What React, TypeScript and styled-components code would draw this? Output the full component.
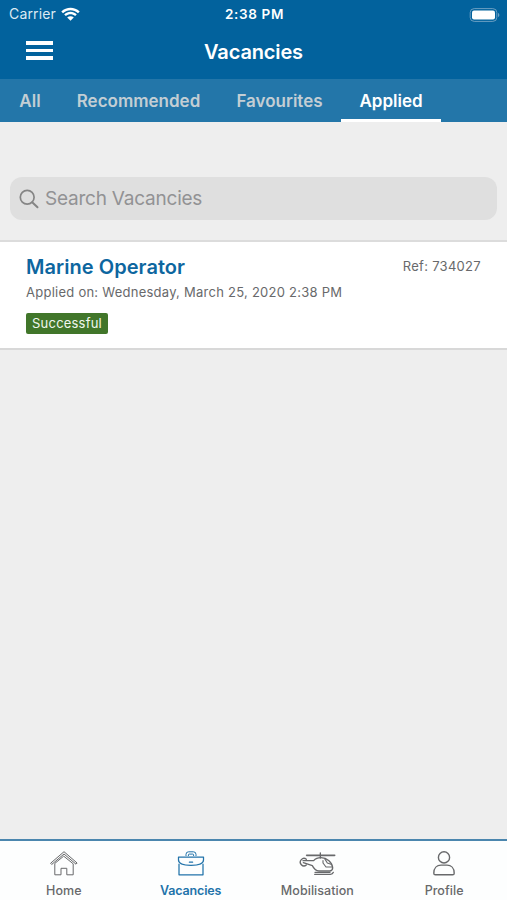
import React from "react";
import styled, { createGlobalStyle } from "styled-components";

const GlobalStyle = createGlobalStyle`
  * { box-sizing: border-box; }
  body { margin: 0; background: #eeeeee; }
`;

const Screen = styled.div`
  display: flex;
  flex-direction: column;
  width: 507px;
  height: 900px;
  overflow: hidden;
  background: #eeeeee;
  font-family: Inter, "Liberation Sans", sans-serif;
`;

const Header = styled.header`
  flex: none;
  height: 79px;
  background: #02629d;
  color: #fff;
`;

const StatusBar = styled.div`
  display: grid;
  grid-template-columns: 1fr auto 1fr;
  align-items: center;
  height: 28px;
  padding: 0 7px 0 9px;
`;

const Carrier = styled.div`
  display: flex;
  align-items: center;
  gap: 5px;
`;

const Label = styled.span<{ $size: number; $weight?: number; $spacing?: number; $color?: string }>`
  font-size: ${(p) => p.$size}px;
  font-weight: ${(p) => p.$weight ?? 400};
  letter-spacing: ${(p) => p.$spacing ?? 0}px;
  color: ${(p) => p.$color ?? "inherit"};
  line-height: 1.2;
  white-space: nowrap;
`;

const BatterySlot = styled.div`
  display: flex;
  justify-content: flex-end;
  padding-top: 1px;
`;

const TitleBar = styled.div`
  display: grid;
  grid-template-columns: 1fr auto 1fr;
  align-items: center;
  height: 48px;
  padding: 0 26px;
`;

const MenuButton = styled.button`
  display: flex;
  flex-direction: column;
  gap: 4px;
  width: 27px;
  padding: 0;
  margin-top: -3px;
  border: 0;
  background: none;
`;

const MenuLine = styled.span`
  height: 3.7px;
  background: #fff;
`;

const Tabs = styled.nav`
  display: grid;
  grid-template-columns: 58px 159px 123px 100px;
  flex: none;
  height: 43px;
  padding-left: 1px;
  background: #2376a9;
`;

const Tab = styled.a<{ $active?: boolean }>`
  display: flex;
  align-items: center;
  justify-content: center;
  padding-top: 4px;
  color: ${(p) => (p.$active ? "#ffffff" : "#c3ced4")};
  border-bottom: 3px solid ${(p) => (p.$active ? "#ffffff" : "transparent")};
`;

const Main = styled.main`
  flex: 1;
`;

const SearchBox = styled.div`
  display: flex;
  align-items: center;
  gap: 6px;
  height: 43px;
  margin: 55px 10px 20px;
  padding: 1px 9px 0;
  border-radius: 12px;
  background: #dfdfdf;
`;

const Card = styled.article`
  display: flex;
  flex-direction: column;
  align-items: flex-start;
  height: 110px;
  padding: 13px 26px 0;
  background: #fff;
  border-top: 2px solid #dcdcdc;
  border-bottom: 2px solid #d8d8d8;
`;

const CardHeading = styled.div`
  display: flex;
  justify-content: space-between;
  align-items: center;
  width: 100%;
  height: 24px;
`;

const AppliedOn = styled.div`
  display: flex;
  align-items: center;
  height: 20px;
  margin-top: 4px;
`;

const Badge = styled.div`
  display: flex;
  align-items: center;
  justify-content: center;
  width: 82px;
  height: 21px;
  margin-top: 10px;
  border-radius: 2px;
  background: #41762a;
  color: #f1f6ee;
`;

const BottomNav = styled.nav`
  display: grid;
  grid-template-columns: repeat(4, 1fr);
  flex: none;
  height: 61px;
  background: #fdfefe;
  border-top: 2px solid #4b86ae;
`;

const NavItem = styled.a<{ $active?: boolean }>`
  display: flex;
  flex-direction: column;
  align-items: center;
  padding: 10px 0 0 1px;
  gap: 7px;
  color: ${(p) => (p.$active ? "#2273aa" : "#68696b")};
`;

const WifiIcon = () => (
  <svg width="19" height="14" viewBox="0 0 19 14" fill="#fff">
    <path d="M.3 4.5C5.4-.5 13.6-.5 18.7 4.5L17 6.2C12.8 2.2 6.2 2.2 2 6.2Z" />
    <path d="M3.2 7.4C6.7 4 12.3 4 15.8 7.4L14.1 9.1C11.5 6.7 7.5 6.7 4.9 9.1Z" />
    <path d="M6.2 10.4C8 8.7 11 8.7 12.8 10.4L9.5 13.7Z" />
  </svg>
);

const BatteryIcon = () => (
  <svg width="31" height="14" viewBox="0 0 31 14">
    <rect x="1.2" y=".6" width="26.6" height="12.8" rx="4" fill="none" stroke="#6b9fc2" strokeWidth="1" />
    <rect x="3" y="2.4" width="23" height="9.2" rx="2" fill="#fff" />
    <path d="M29 5C30.8 5.4 30.8 8.6 29 9Z" fill="#6b9fc2" />
  </svg>
);

const SearchIcon = () => (
  <svg width="20" height="20" viewBox="0 0 20 20" fill="none" stroke="#858585" strokeWidth="1.7" strokeLinecap="round">
    <circle cx="8.2" cy="8.2" r="6.9" />
    <path d="M13.2 13.2L18.5 18.3" strokeWidth="2" />
  </svg>
);

const HomeIcon = () => (
  <svg width="28" height="25" viewBox="0 0 28 25" fill="none" stroke="currentColor" strokeWidth="1" strokeLinejoin="round" strokeLinecap="round">
    <path d="M.9 12L14 .7L27.1 12L26 13.2L14 3L2 13.2Z" />
    <path d="M4.8 12.8V23.8H11V17.3H16.8V23.8H23.2V12.8L14 5.4Z" />
  </svg>
);

const BriefcaseIcon = () => (
  <svg width="28" height="25" viewBox="0 0 28 25" fill="none" stroke="currentColor" strokeWidth="1.25" strokeLinejoin="round" strokeLinecap="round">
    <path d="M9 4.6V3.4Q9 .8 11.6 .8H16.4Q19 .8 19 3.4V4.6M11.4 4.6V3.9Q11.4 3.1 12.2 3.1H15.8Q16.6 3.1 16.6 3.9V4.6" strokeWidth="1" />
    <path d="M1.5 6H26.5V9C26.5 12.5 21 14.3 14 14.3S1.5 12.5 1.5 9Z" />
    <path d="M2 13V23.8H26V13M12.4 11.2H15.6" />
  </svg>
);

const HelicopterIcon = () => (
  <svg width="38" height="25" viewBox="0 0 114 75" fill="none" stroke="currentColor" strokeWidth="4" strokeLinejoin="round" strokeLinecap="round">
    <path d="M26 13H110" strokeWidth="5" />
    <path d="M67 6V21M50 70H97Q104 70 106 64M51 64H96" />
    <path d="M25 25A11 11 0 1 0 25 42" />
    <path d="M15 29H47C53 22 60 20 69 20C87 20 103 34 104 50Q104 58 96 60H63C53 60 47 52 43 44L16 35" />
    <path d="M75 29V36L84 48H102M80 23L88 36L99 40" strokeWidth="3.4" />
  </svg>
);

const ProfileIcon = () => (
  <svg width="28" height="25" viewBox="0 0 28 25" fill="none" stroke="currentColor" strokeWidth="1.4" strokeLinejoin="round">
    <circle cx="14" cy="6.4" r="5.6" />
    <path d="M3.8 22.2C3.8 17 7 14.1 11 14.1H17C21 14.1 24.2 17 24.2 22.2Q24.2 23.8 22.6 23.8H5.4Q3.8 23.8 3.8 22.2Z" />
  </svg>
);

const tabs = [
  { name: "All" },
  { name: "Recommended" },
  { name: "Favourites" },
  { name: "Applied", active: true },
];

const navItems = [
  { name: "Home", Icon: HomeIcon },
  { name: "Vacancies", Icon: BriefcaseIcon, active: true },
  { name: "Mobilisation", Icon: HelicopterIcon },
  { name: "Profile", Icon: ProfileIcon },
];

export default function App() {
  return (
    <Screen>
      <GlobalStyle />
      <Header>
        <StatusBar>
          <Carrier>
            <Label $size={14} $spacing={0.15} $color="#dceaf3">Carrier</Label>
            <WifiIcon />
          </Carrier>
          <Label $size={13.5} $weight={600} $spacing={0.65}>2:38 PM</Label>
          <BatterySlot>
            <BatteryIcon />
          </BatterySlot>
        </StatusBar>
        <TitleBar>
          <MenuButton aria-label="Menu">
            <MenuLine />
            <MenuLine />
            <MenuLine />
          </MenuButton>
          <Label $size={20} $weight={600} $spacing={-0.15}>Vacancies</Label>
        </TitleBar>
      </Header>
      <Tabs>
        {tabs.map((t) => (
          <Tab key={t.name} $active={t.active}>
            <Label $size={17} $weight={600}>{t.name}</Label>
          </Tab>
        ))}
      </Tabs>
      <Main>
        <SearchBox>
          <SearchIcon />
          <Label $size={19} $spacing={-0.22} $color="#929294">Search Vacancies</Label>
        </SearchBox>
        <Card>
          <CardHeading>
            <Label $size={20} $weight={600} $spacing={0.05} $color="#0d669f">Marine Operator</Label>
            <Label $size={13} $spacing={0.3} $color="#68696b">Ref: 734027</Label>
          </CardHeading>
          <AppliedOn>
            <Label $size={13} $spacing={0.25} $color="#68696b">Applied on: Wednesday, March 25, 2020 2:38 PM</Label>
          </AppliedOn>
          <Badge>
            <Label $size={13} $spacing={0.2}>Successful</Label>
          </Badge>
        </Card>
      </Main>
      <BottomNav>
        {navItems.map(({ name, Icon, active }) => (
          <NavItem key={name} $active={active}>
            <Icon />
            <Label $size={12.5} $weight={active ? 600 : 500} $spacing={active ? -0.15 : 0.05}>{name}</Label>
          </NavItem>
        ))}
      </BottomNav>
    </Screen>
  );
}
